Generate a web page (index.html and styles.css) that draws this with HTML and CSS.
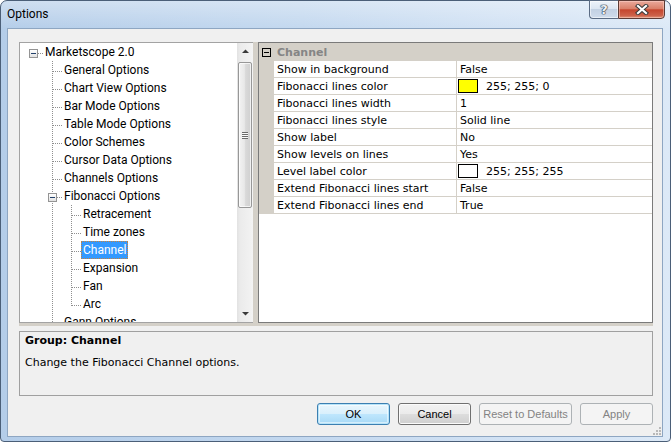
FILE: index.html
```html
<!DOCTYPE html>
<html>
<head>
<meta charset="utf-8">
<title>Options</title>
<link rel="stylesheet" href="styles.css">
</head>
<body>
<div class="window">
  <div class="titlebar">
    <span class="title">Options</span>
    <div class="capbtns">
      <span class="capbtn help"><span class="help-glyph">?</span></span>
      <span class="capbtn close">
        <svg width="14" height="11" viewBox="0 0 14 11"><path d="M3 2 L11 9 M11 2 L3 9" stroke="#3b3b3b" stroke-width="4.2" stroke-linecap="square" fill="none"/><path d="M3 2 L11 9 M11 2 L3 9" stroke="#ffffff" stroke-width="2.2" stroke-linecap="square" fill="none"/></svg>
      </span>
    </div>
  </div>
  <div class="client">
    <div class="split">
      <div class="tree-pane">
        <div class="tree-view">
          <ul class="tree">
            <li class="node root">
              <div class="row"><span class="gutter"><span class="exp"></span></span><span class="label">Marketscope 2.0</span></div>
              <ul class="children">
                <li class="node"><div class="row"><span class="gutter"></span><span class="label">General Options</span></div></li>
                <li class="node"><div class="row"><span class="gutter"></span><span class="label">Chart View Options</span></div></li>
                <li class="node"><div class="row"><span class="gutter"></span><span class="label">Bar Mode Options</span></div></li>
                <li class="node"><div class="row"><span class="gutter"></span><span class="label">Table Mode Options</span></div></li>
                <li class="node"><div class="row"><span class="gutter"></span><span class="label">Color Schemes</span></div></li>
                <li class="node"><div class="row"><span class="gutter"></span><span class="label">Cursor Data Options</span></div></li>
                <li class="node"><div class="row"><span class="gutter"></span><span class="label">Channels Options</span></div></li>
                <li class="node">
                  <div class="row"><span class="gutter"><span class="exp"></span></span><span class="label">Fibonacci Options</span></div>
                  <ul class="children">
                    <li class="node"><div class="row"><span class="gutter"></span><span class="label">Retracement</span></div></li>
                    <li class="node"><div class="row"><span class="gutter"></span><span class="label">Time zones</span></div></li>
                    <li class="node"><div class="row"><span class="gutter"></span><span class="label selected">Channel</span></div></li>
                    <li class="node"><div class="row"><span class="gutter"></span><span class="label">Expansion</span></div></li>
                    <li class="node"><div class="row"><span class="gutter"></span><span class="label">Fan</span></div></li>
                    <li class="node last"><div class="row"><span class="gutter"></span><span class="label">Arc</span></div></li>
                  </ul>
                </li>
                <li class="node"><div class="row"><span class="gutter"></span><span class="label">Gann Options</span></div></li>
              </ul>
            </li>
          </ul>
        </div>
        <div class="vscroll">
          <div class="sb-arrow"><svg width="7" height="4" viewBox="0 0 7 4"><polygon points="0,4 7,4 3.5,0.5" fill="#3a3a3a"/></svg></div>
          <div class="sb-thumb"><span class="sb-grip"></span></div>
          <div class="sb-space"></div>
          <div class="sb-arrow"><svg width="7" height="4" viewBox="0 0 7 4"><polygon points="0,0 7,0 3.5,3.5" fill="#3a3a3a"/></svg></div>
        </div>
      </div>
      <div class="grid">
        <div class="cat"><span class="cat-box"></span><span class="cat-name">Channel</span></div>
        <div class="prow"><span class="pname">Show in background</span><span class="pval">False</span></div>
        <div class="prow"><span class="pname">Fibonacci lines color</span><span class="pval color"><span class="swatch yellow"></span>255; 255; 0</span></div>
        <div class="prow"><span class="pname">Fibonacci lines width</span><span class="pval">1</span></div>
        <div class="prow"><span class="pname">Fibonacci lines style</span><span class="pval">Solid line</span></div>
        <div class="prow"><span class="pname">Show label</span><span class="pval">No</span></div>
        <div class="prow"><span class="pname">Show levels on lines</span><span class="pval">Yes</span></div>
        <div class="prow"><span class="pname">Level label color</span><span class="pval color"><span class="swatch white"></span>255; 255; 255</span></div>
        <div class="prow"><span class="pname">Extend Fibonacci lines start</span><span class="pval">False</span></div>
        <div class="prow"><span class="pname">Extend Fibonacci lines end</span><span class="pval">True</span></div>
      </div>
    </div>
    <div class="desc">
      <div class="desc-title">Group: Channel</div>
      <div class="desc-text">Change the Fibonacci Channel options.</div>
    </div>
    <div class="buttons">
      <button class="btn default">OK</button>
      <button class="btn">Cancel</button>
      <button class="btn disabled wide">Reset to Defaults</button>
      <button class="btn disabled">Apply</button>
    </div>
    <svg class="grip" width="8" height="8" viewBox="0 0 8 8">
      <rect x="6" y="0" width="2" height="2" fill="#b8b8b8"/>
      <rect x="3" y="3" width="2" height="2" fill="#b8b8b8"/>
      <rect x="6" y="3" width="2" height="2" fill="#b8b8b8"/>
      <rect x="0" y="6" width="2" height="2" fill="#b8b8b8"/>
      <rect x="3" y="6" width="2" height="2" fill="#b8b8b8"/>
      <rect x="6" y="6" width="2" height="2" fill="#b8b8b8"/>
    </svg>
  </div>
</div>
</body>
</html>
```

FILE: styles.css
```css
* { box-sizing: border-box; }
html, body { margin: 0; padding: 0; }
body {
  width: 672px;
  height: 444px;
  overflow: hidden;
  background: #ffffff;
  font-family: "Liberation Sans", Arial, sans-serif;
}

.window {
  width: 671px;
  height: 442px;
  border: 1px solid #4b5f78;
  border-radius: 7px 7px 4px 4px;
  background:
    linear-gradient(180deg, rgba(255,255,255,0.35) 0, rgba(255,255,255,0) 28px),
    linear-gradient(90deg, #b4cde9 0%, #c3d8ef 45%, #d2e2f4 75%, #dce9f7 100%);
  display: flex;
  flex-direction: column;
}

.titlebar {
  height: 27px;
  display: flex;
  justify-content: space-between;
  align-items: flex-start;
}
.title {
  font-family: Roboto, "Liberation Sans", sans-serif;
  font-size: 12px;
  line-height: 27px;
  padding-left: 6px;
  color: #000;
}
.capbtns {
  display: flex;
  margin-top: -1px;
  margin-right: 5px;
}
.capbtn {
  height: 19px;
  display: flex;
  align-items: center;
  justify-content: center;
}
.help {
  width: 29px;
  border: 1px solid #5b6c84;
  border-right: none;
  border-radius: 0 0 0 4px;
  background: linear-gradient(180deg, #eef3fa 0%, #dce6f2 45%, #c3d1e3 50%, #d0dcec 100%);
  box-shadow: inset 0 0 0 1px rgba(255,255,255,0.55);
}
.help-glyph {
  font-family: "DejaVu Sans", sans-serif;
  font-weight: bold;
  font-size: 13px;
  line-height: 13px;
  color: #eef1f5;
  text-shadow: 0 0 1px #2d3a4d, 0 0 1px #2d3a4d, 0 0 1px #2d3a4d, 0 0 1px #2d3a4d;
}
.close {
  width: 47px;
  border: 1px solid #5d3b35;
  border-radius: 0 0 4px 0;
  background: linear-gradient(180deg, #eaaa9c 0%, #d98069 45%, #c5462e 52%, #cd6149 85%, #e0957a 100%);
  box-shadow: inset 0 0 0 1px rgba(255,220,210,0.45);
}

.client {
  flex: 1;
  margin: 0 7px 4px 6px;
  border: 1px solid #8ea6c2;
  background: #f0f0f0;
  padding: 13px 9px 0 11px;
  display: flex;
  flex-direction: column;
  position: relative;
}

.split {
  height: 284px;
  display: flex;
  gap: 5px;
  padding-bottom: 3px;
  background: #d4d0c8;
}

/* tree */
.tree-pane {
  width: 234px;
  display: flex;
  border: 1px solid #a3a3a3;
  border-right: none;
  background: #ffffff;
}
.tree-view {
  flex: 1;
  overflow: hidden;
  font-family: Roboto, "Liberation Sans", sans-serif;
  font-size: 12px;
  color: #000;
}
.tree, .children {
  list-style: none;
  margin: 0;
}
.tree { padding: 0 0 0 9px; }
.children { padding: 0 0 0 19px; }
.node {
  background-image:
    repeating-linear-gradient(180deg, #8f8f8f 0 1px, transparent 1px 2px),
    repeating-linear-gradient(90deg, #8f8f8f 0 1px, transparent 1px 2px);
  background-repeat: no-repeat;
  background-position: 4px 0, 5px 10px;
  background-size: 1px 100%, 9px 1px;
}
.node.last { background-size: 1px 11px, 9px 1px; }
.node.root { background-size: 0 0, 9px 1px; }
.row {
  display: flex;
  height: 18px;
}
.gutter {
  width: 14px;
  flex: none;
}
.exp {
  display: flex;
  align-items: center;
  justify-content: center;
  width: 9px;
  height: 9px;
  margin-top: 6px;
  border: 1px solid #949494;
  background: linear-gradient(180deg, #ffffff, #e2e2e2);
}
.exp::after {
  content: "";
  width: 5px;
  height: 1px;
  background: #23416b;
}
.label {
  padding: 0 2px;
  height: 18px;
  line-height: 18px;
  white-space: nowrap;
}
.label.selected {
  background: #3399ff;
  color: #ffffff;
  outline: 1px dotted #c8823c;
  outline-offset: -1px;
}

.vscroll {
  width: 16px;
  flex: none;
  display: flex;
  flex-direction: column;
  background: linear-gradient(90deg, #e2e2e2 0%, #ebebeb 20%, #f1f1f1 80%, #f4f4f4 100%);
}
.sb-arrow {
  height: 16px;
  display: flex;
  align-items: center;
  justify-content: center;
}
.sb-thumb {
  margin: 3px 1px 0 1px;
  height: 146px;
  border: 1px solid #979797;
  border-radius: 2px;
  background: linear-gradient(90deg, #f3f3f3 0%, #e8e8e8 45%, #d9d9d9 55%, #d0d0d0 100%);
  box-shadow: inset 0 0 0 1px rgba(255,255,255,0.7);
  display: flex;
  align-items: center;
  justify-content: center;
}
.sb-grip {
  width: 6px;
  height: 7px;
  background: repeating-linear-gradient(180deg, #6a6a6a 0 1px, #fafafa 1px 2px);
}
.sb-space { flex: 1; }

/* property grid */
.grid {
  flex: 1;
  border: 1px solid #7a7a7a;
  background: #ffffff;
  font-family: "DejaVu Sans", Verdana, sans-serif;
  font-size: 11px;
  color: #000;
}
.cat {
  height: 18px;
  display: flex;
  align-items: center;
  background: #d4d0c8;
}
.cat-box {
  width: 9px;
  height: 9px;
  margin-left: 3px;
  border: 1px solid #000;
  display: flex;
  align-items: center;
  justify-content: center;
}
.cat-box::after {
  content: "";
  width: 5px;
  height: 1px;
  background: #000;
}
.cat-name {
  margin-left: 6px;
  font-weight: bold;
  color: #858585;
}
.prow {
  display: flex;
  height: 17px;
  padding-left: 15px;
  background: #d4d0c8;
}
.pname, .pval {
  background: #ffffff;
  border-bottom: 1px solid #d4d0c8;
  padding-top: 1px;
  line-height: 15px;
  padding-left: 3px;
  white-space: nowrap;
}
.pname {
  width: 183px;
  border-right: 1px solid #d4d0c8;
}
.pval { flex: 1; }
.pval.color {
  padding-top: 0;
  padding-left: 1px;
  display: flex;
  align-items: center;
}
.swatch {
  width: 20px;
  height: 14px;
  border: 1px solid #000;
  margin-right: 8px;
}
.swatch.yellow { background: #ffff00; }
.swatch.white { background: #ffffff; }

/* description */
.desc {
  margin-top: 5px;
  height: 65px;
  border: 1px solid #a0a0a0;
  padding: 2px 5px;
  font-family: "DejaVu Sans", Verdana, sans-serif;
  font-size: 11px;
  line-height: 13px;
  color: #000;
}
.desc-title { font-weight: bold; }
.desc-text { margin-top: 9px; }

/* buttons */
.buttons {
  margin-top: 7px;
  display: flex;
  justify-content: flex-end;
  gap: 8px;
}
.btn {
  width: 73px;
  height: 22px;
  padding: 0;
  border: 1px solid #707070;
  border-radius: 3px;
  font-family: "Liberation Sans", Arial, sans-serif;
  font-size: 11px;
  color: #000;
  background: linear-gradient(180deg, #f2f2f2 0%, #ebebeb 48%, #dddddd 52%, #cfcfcf 100%);
  box-shadow: inset 0 0 0 1px #fbfbfb;
}
.btn.wide { width: 93px; }
.btn.default {
  border-color: #3c7fb1;
  background: linear-gradient(180deg, #eaf6fd 0%, #d9f0fc 48%, #bee6fd 52%, #a7d9f5 100%);
  box-shadow: inset 0 0 0 1px #b7e4f9, inset 0 0 0 2px rgba(255,255,255,0.5);
}
.btn.disabled {
  border-color: #adb2b5;
  background: #f4f4f4;
  color: #838383;
  box-shadow: none;
}

.grip {
  position: absolute;
  right: 1px;
  bottom: 1px;
}
```
